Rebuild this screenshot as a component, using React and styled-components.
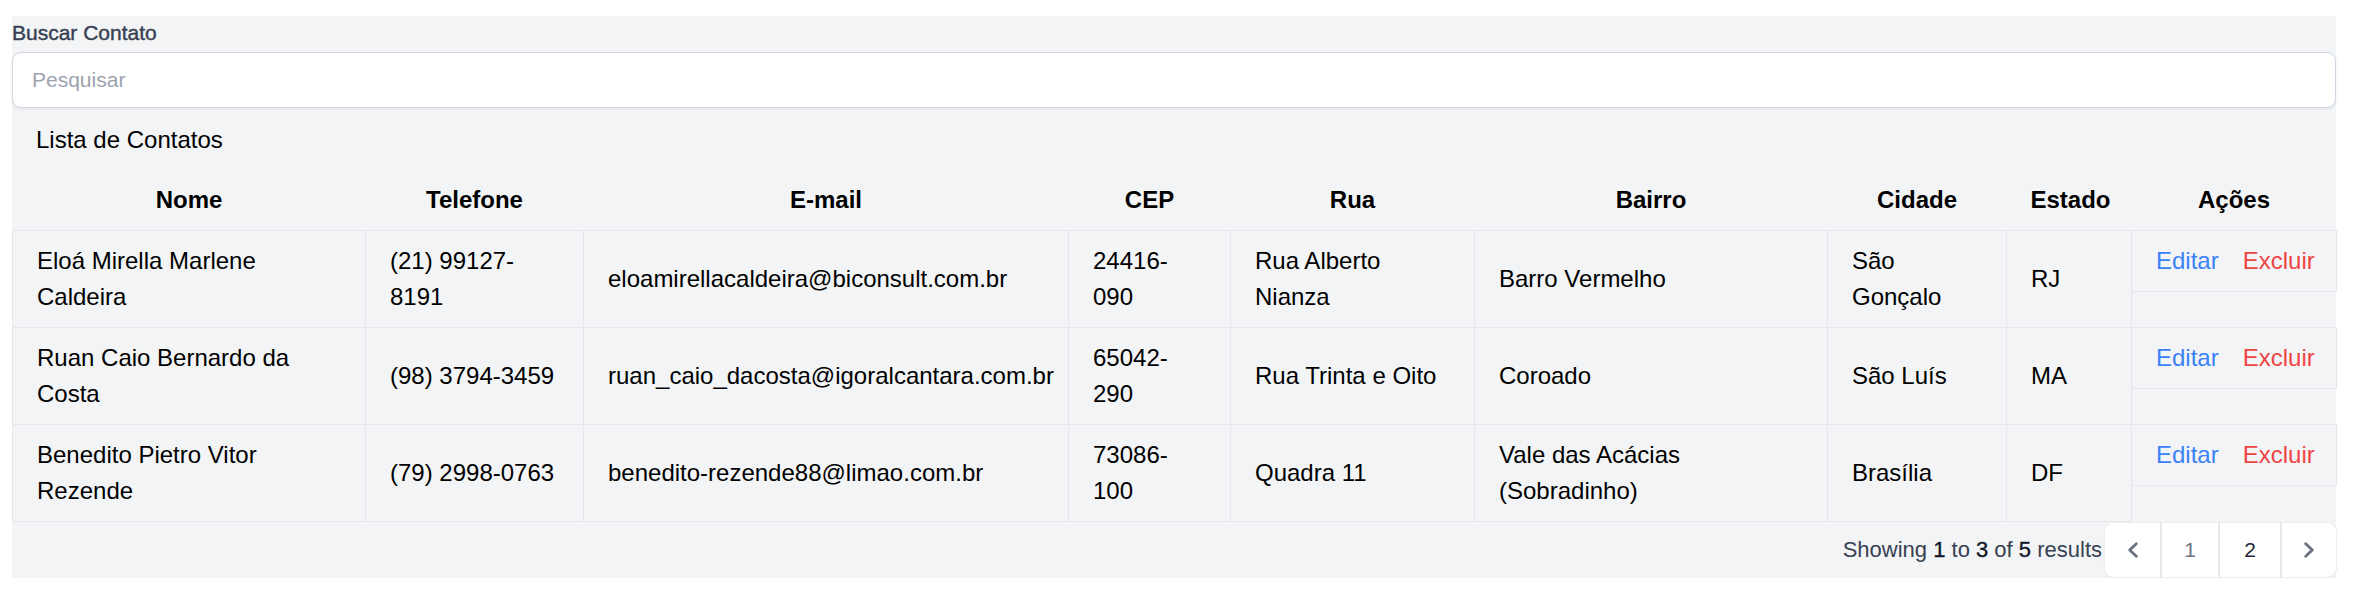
import styled, { createGlobalStyle } from "styled-components";

const GlobalStyle = createGlobalStyle`
    body {
        margin: 0;
        background: #ffffff;
        font-family: "Liberation Sans", Arial, sans-serif;
    }
`;

const Page = styled.div`
    padding: 16px 19px 0 12px;
`;

const Panel = styled.section`
    background: #f3f4f6;
    padding: 2px 0 1px 0;
`;

const Label = styled.label`
    display: block;
    font-size: 21px;
    line-height: 30px;
    font-weight: 500;
    color: #374151;
    -webkit-text-stroke: 0.4px #374151;
    margin-bottom: 4px;
`;

const SearchInput = styled.input`
    display: block;
    box-sizing: border-box;
    width: 100%;
    height: 56px;
    padding: 12px 19px;
    font-family: inherit;
    font-size: 21px;
    line-height: 30px;
    color: #111827;
    background: #ffffff;
    border: 1px solid #cfd6e1;
    border-radius: 9px;
    box-shadow: 0 1px 3px rgba(15, 23, 42, 0.08);
    outline: none;

    &::placeholder {
        color: #9ca3af;
    }
`;

const Table = styled.table`
    width: 100%;
    margin-top: 2px;
    table-layout: fixed;
    border-collapse: collapse;
    font-size: 24px;
    line-height: 36px;
    color: #000000;
`;

const Caption = styled.caption`
    caption-side: top;
    text-align: left;
    padding: 12px 24px;
`;

const Col = styled.col`
    width: ${props => props.$w}px;
`;

const HeadCell = styled.th`
    padding: 12px 24px;
    font-weight: 700;
    text-align: center;
    border-bottom: 1px solid #e5e7eb;
`;

const Cell = styled.td`
    padding: 12px 24px;
    border: 1px solid #e5e7eb;
    vertical-align: middle;
`;

const ActionCell = styled.td`
    padding: 0;
    vertical-align: top;
    border-top: 1px solid #e5e7eb;
    border-left: 1px solid #e5e7eb;
`;

const ActionBox = styled.div`
    display: flex;
    gap: 24px;
    padding: 12px 24px;
    border-bottom: 1px solid #e5e7eb;
    border-right: 1px solid #e5e7eb;
`;

const ActionLink = styled.a`
    color: ${props => (props.$danger ? '#ef4444' : '#3b82f6')};
    text-decoration: none;
    cursor: pointer;
`;

const Footer = styled.div`
    display: flex;
    justify-content: flex-end;
    align-items: center;
    gap: 3px;
    margin-top: 1px;
`;

const Summary = styled.p`
    margin: 0;
    font-size: 22px;
    line-height: 30px;
    color: #374151;

    b {
        font-weight: 500;
        color: #111827;
        -webkit-text-stroke: 0.35px #111827;
    }
`;

const Pager = styled.nav`
    display: inline-flex;
    background: #ffffff;
    border-radius: 9px;
    overflow: hidden;
    box-shadow: 0 0 0 1px #eceef2, 0 1px 3px rgba(0, 0, 0, 0.07);
`;

const PageButton = styled.button`
    display: flex;
    align-items: center;
    justify-content: center;
    height: 54px;
    min-width: ${props => props.$w}px;
    padding: 0;
    background: #ffffff;
    border: none;
    border-left: ${props => (props.$first ? 'none' : '2px solid #e5e7eb')};
    font-family: inherit;
    font-size: 21px;
    color: ${props => (props.$current ? '#1f2937' : '#6b7280')};
    cursor: pointer;
`;

const Chevron = ({ dir }) => (
    <svg width="30" height="30" viewBox="0 0 20 20" fill="none" stroke="#6b7280" strokeWidth="1.9" strokeLinecap="round" strokeLinejoin="round">
        {dir === 'left' ? <path d="M12.2 5.8 7.8 10l4.4 4.2" /> : <path d="M7.8 5.8 12.2 10l-4.4 4.2" />}
    </svg>
);

/* colunas da tabela */
const COLUMNS = [
    { label: 'Nome', width: 353 },
    { label: 'Telefone', width: 218 },
    { label: 'E-mail', width: 485 },
    { label: 'CEP', width: 162 },
    { label: 'Rua', width: 244 },
    { label: 'Bairro', width: 353 },
    { label: 'Cidade', width: 179 },
    { label: 'Estado', width: 125 },
    { label: 'Ações', width: 205 },
];

const CONTACTS = [
    {
        id: 1,
        nome: 'Eloá Mirella Marlene Caldeira',
        telefone: '(21) 99127-8191',
        email: 'eloamirellacaldeira@biconsult.com.br',
        cep: '24416-090',
        rua: 'Rua Alberto Nianza',
        bairro: 'Barro Vermelho',
        cidade: 'São Gonçalo',
        estado: 'RJ',
    },
    {
        id: 2,
        nome: 'Ruan Caio Bernardo da Costa',
        telefone: '(98) 3794-3459',
        email: 'ruan_caio_dacosta@igoralcantara.com.br',
        cep: '65042-290',
        rua: 'Rua Trinta e Oito',
        bairro: 'Coroado',
        cidade: 'São Luís',
        estado: 'MA',
    },
    {
        id: 3,
        nome: 'Benedito Pietro Vitor Rezende',
        telefone: '(79) 2998-0763',
        email: 'benedito-rezende88@limao.com.br',
        cep: '73086-100',
        rua: 'Quadra 11',
        bairro: 'Vale das Acácias (Sobradinho)',
        cidade: 'Brasília',
        estado: 'DF',
    },
];

function App() {
    return (
        <Page>
            <GlobalStyle />
            <Panel>
                <Label htmlFor="busca">Buscar Contato</Label>
                <SearchInput id="busca" type="text" placeholder="Pesquisar" />

                <Table>
                    <Caption>Lista de Contatos</Caption>
                    <colgroup>
                        {COLUMNS.map(col => <Col key={col.label} $w={col.width} />)}
                    </colgroup>
                    <thead>
                        <tr>
                            {COLUMNS.map(col => <HeadCell key={col.label}>{col.label}</HeadCell>)}
                        </tr>
                    </thead>
                    <tbody>
                        {CONTACTS.map(c => (
                            <tr key={c.id}>
                                <Cell>{c.nome}</Cell>
                                <Cell>{c.telefone}</Cell>
                                <Cell>{c.email}</Cell>
                                <Cell>{c.cep}</Cell>
                                <Cell>{c.rua}</Cell>
                                <Cell>{c.bairro}</Cell>
                                <Cell>{c.cidade}</Cell>
                                <Cell>{c.estado}</Cell>
                                <ActionCell>
                                    <ActionBox>
                                        <ActionLink>Editar</ActionLink>
                                        <ActionLink $danger>Excluir</ActionLink>
                                    </ActionBox>
                                </ActionCell>
                            </tr>
                        ))}
                    </tbody>
                </Table>

                <Footer>
                    <Summary>
                        Showing <b>1</b> to <b>3</b> of <b>5</b> results
                    </Summary>
                    <Pager aria-label="Pagination">
                        <PageButton $first $w={55}><Chevron dir="left" /></PageButton>
                        <PageButton $w={58}>1</PageButton>
                        <PageButton $w={62} $current>2</PageButton>
                        <PageButton $w={56}><Chevron dir="right" /></PageButton>
                    </Pager>
                </Footer>
            </Panel>
        </Page>
    );
}

export default App;
